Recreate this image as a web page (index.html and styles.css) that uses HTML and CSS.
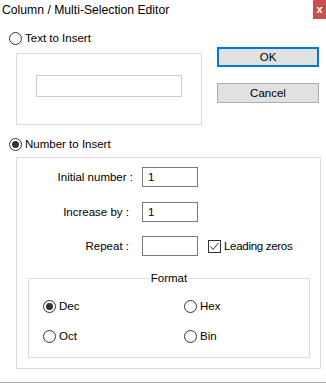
FILE: index.html
```html
<!DOCTYPE html>
<html>
<head>
<meta charset="utf-8">
<link rel="stylesheet" href="styles.css">
</head>
<body>
<div class="window">
  <div class="titlebar">
    <span class="title">Column / Multi-Selection Editor</span>
    <span class="close">x</span>
  </div>
  <div class="top">
    <div class="left">
      <div class="radio-row">
        <span class="radio"></span><span class="label">Text to Insert</span>
      </div>
      <div class="group text-group">
        <div class="input disabled"></div>
      </div>
    </div>
    <div class="buttons">
      <div class="btn default">OK</div>
      <div class="btn">Cancel</div>
    </div>
  </div>
  <div class="radio-row number-radio">
    <span class="radio checked"></span><span class="label">Number to Insert</span>
  </div>
  <div class="group number-group">
    <div class="field row-initial">
      <span class="flabel">Initial number :</span>
      <div class="input">1</div>
    </div>
    <div class="field row-increase">
      <span class="flabel">Increase by :</span>
      <div class="input">1</div>
    </div>
    <div class="field row-repeat">
      <span class="flabel">Repeat :</span>
      <div class="input"></div>
      <span class="checkbox"><svg width="11" height="11" viewBox="0 0 11 11"><path d="M1.5 5.5 L4 8.5 L9.5 2" fill="none" stroke="#333" stroke-width="1"/></svg></span>
      <span class="label lz">Leading zeros</span>
    </div>
    <fieldset class="format">
      <legend>Format</legend>
      <div class="fmt-grid">
        <div class="fmt-item"><span class="radio checked"></span><span class="label">Dec</span></div>
        <div class="fmt-item"><span class="radio"></span><span class="label">Hex</span></div>
        <div class="fmt-item"><span class="radio"></span><span class="label">Oct</span></div>
        <div class="fmt-item"><span class="radio"></span><span class="label">Bin</span></div>
      </div>
    </fieldset>
  </div>
</div>
</body>
</html>
```
FILE: styles.css
```css
html, body {
  margin: 0;
  padding: 0;
  background: #ffffff;
}
.window {
  width: 326px;
  height: 383px;
  box-sizing: border-box;
  border-bottom: 1px solid #a9a9a9;
  background: #ffffff;
  font-family: "Liberation Sans", Arial, sans-serif;
  font-size: 11.5px;
  color: #000;
  overflow: hidden;
}
.titlebar {
  display: flex;
  height: 19px;
  align-items: flex-start;
}
.title {
  font-size: 12.2px;
  line-height: 19px;
  padding-left: 2px;
  padding-top: 1px;
}
.close {
  margin-left: auto;
  width: 13px;
  height: 19px;
  background: #c75050;
  color: #fff;
  font-weight: bold;
  font-size: 11px;
  line-height: 18px;
  text-align: center;
}
.top {
  display: flex;
  margin-top: 13px;
}
.left {
  width: 202px;
}
.radio-row {
  display: flex;
  align-items: center;
  height: 13px;
  margin-left: 9px;
}
.radio {
  width: 13px;
  height: 13px;
  box-sizing: border-box;
  border: 1px solid #333;
  border-radius: 50%;
  display: flex;
  align-items: center;
  justify-content: center;
  flex: none;
}
.radio.checked::after {
  content: "";
  width: 7px;
  height: 7px;
  border-radius: 50%;
  background: #333;
}
.label {
  margin-left: 3px;
  line-height: 13px;
}
.lz {
  letter-spacing: -0.3px;
}
.group {
  box-sizing: border-box;
  border: 1px solid #dcdcdc;
}
.text-group {
  margin-left: 16px;
  margin-top: 8px;
  width: 186px;
  height: 72px;
  padding-left: 19px;
  padding-top: 21px;
}
.input {
  box-sizing: border-box;
  width: 56px;
  height: 20px;
  border: 1px solid #7a7a7a;
  padding-left: 5px;
  line-height: 18px;
  background: #fff;
}
.input.disabled {
  width: 146px;
  height: 22px;
  border-color: #cccccc;
}
.buttons {
  margin-left: 15px;
  padding-top: 15px;
  display: flex;
  flex-direction: column;
  gap: 16px;
}
.btn {
  box-sizing: border-box;
  width: 102px;
  height: 20px;
  border: 1px solid #adadad;
  background: #e1e1e1;
  text-align: center;
  line-height: 18px;
}
.btn.default {
  border: 2px solid #0078d7;
  line-height: 16px;
}
.number-radio {
  margin-top: 13px;
}
.number-group {
  margin-left: 16px;
  margin-top: 6px;
  width: 305px;
  height: 212px;
  padding-top: 9px;
}
.field {
  display: flex;
  align-items: center;
  height: 20px;
}
.flabel {
  width: 125px;
  text-align: right;
  box-sizing: border-box;
  padding-right: 9px;
  flex: none;
}
.row-increase {
  margin-top: 15px;
}
.row-increase .flabel,
.row-repeat .flabel {
  padding-right: 13px;
}
.row-repeat {
  margin-top: 14px;
}
.checkbox {
  width: 13px;
  height: 13px;
  box-sizing: border-box;
  border: 1px solid #333;
  margin-left: 10px;
  display: flex;
  align-items: center;
  justify-content: center;
  flex: none;
}
.format {
  margin: 16px 0 0 11px;
  width: 282px;
  height: 86px;
  box-sizing: border-box;
  border: 1px solid #dcdcdc;
  padding: 0;
}
.format legend {
  margin: 0 auto;
  padding: 0 1px;
  line-height: 13px;
}
.fmt-grid {
  display: grid;
  grid-template-columns: 141px 1fr;
  row-gap: 17px;
  padding-top: 15px;
  padding-left: 14px;
}
.fmt-item {
  display: flex;
  align-items: center;
  height: 13px;
}
```
